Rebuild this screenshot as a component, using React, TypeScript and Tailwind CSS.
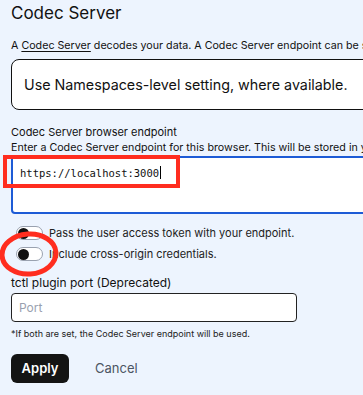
function Toggle() {
  return (
    <span className="relative inline-flex h-[14px] w-[27px] shrink-0 items-center rounded-full border border-gray-400 bg-white">
      <span className="ml-px h-[11px] w-[11px] rounded-full bg-[#111]" />
    </span>
  );
}

export default function App() {
  return (
    <div className="relative h-[395px] w-[363px] overflow-hidden bg-[#edf4fe] font-['Inter',sans-serif] text-[#111]">
      <div className="w-[440px] pl-[11px] pt-[2px]">
        <h2 className="text-[17px] leading-[22px]">Codec Server</h2>

        <p className="mt-[14px] whitespace-nowrap text-[10.7px] leading-4">
          A <span className="underline underline-offset-2">Codec Server</span> decodes your data. A Codec Server endpoint can be set
          at the Namespace level.
        </p>

        <div className="mt-[5px] flex h-[51px] items-center rounded-lg border border-[#111] bg-white pl-3 text-[14.3px]">
          Use Namespaces-level setting, where available.
        </div>

        <div className="mt-[14px] text-[11px] leading-4">Codec Server browser endpoint</div>
        <div className="whitespace-nowrap text-[10.7px] leading-4">
          Enter a Codec Server endpoint for this browser. This will be stored in your browser.
        </div>

        <div className="h-[58px] rounded-b-sm border-2 border-[#1d5bd6] bg-white px-[7px] pt-[6px] font-['DejaVu_Sans_Mono',monospace] text-[10.5px] leading-[16px]">
          https://localhost:3000<span className="ml-px inline-block h-[13px] w-px translate-y-[2px] bg-black" />
        </div>

        <div className="mt-[11px] flex flex-col gap-[5px] pl-[5px] text-[11px] leading-4 text-[#222]">
          <label className="flex items-center gap-[6px]">
            <Toggle />
            Pass the user access token with your endpoint.
          </label>
          <label className="flex items-center gap-[6px]">
            <Toggle />
            Include cross-origin credentials.
          </label>
        </div>

        <div className="mt-[13px] text-[12px] leading-4">tctl plugin port (Deprecated)</div>
        <div className="mt-[2px] flex h-[29px] w-[286px] items-center rounded border border-[#222] bg-white pl-[7px] text-[12px] text-gray-400">
          Port
        </div>
        <p className="mt-[6px] text-[9px] leading-3 text-[#222]">
          *If both are set, the Codec Server endpoint will be used.
        </p>

        <div className="mt-[14px] flex items-center gap-[26px]">
          <button className="h-[29px] w-[58px] rounded-md bg-[#141414] text-[13px] font-semibold text-white">Apply</button>
          <button className="text-[13px] text-[#4b5563]">Cancel</button>
        </div>
      </div>

      {/* annotation marks */}
      <div className="absolute left-[3px] top-[155px] h-[33px] w-[177px] border-4 border-[#ff2d1f]" />
      <svg className="absolute left-0 top-[229px]" width="64" height="52" viewBox="0 0 64 52">
        <ellipse cx="29" cy="25" rx="27" ry="20" fill="none" stroke="#ff2d1f" strokeWidth="5" transform="rotate(-4 29 25)" />
      </svg>
    </div>
  );
}
